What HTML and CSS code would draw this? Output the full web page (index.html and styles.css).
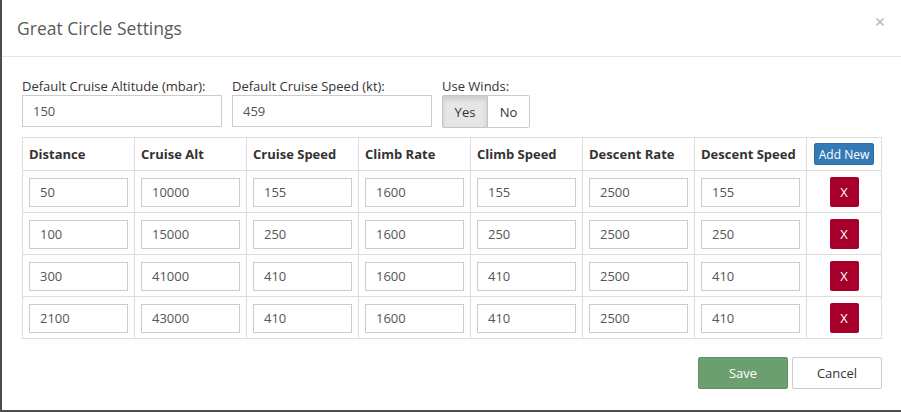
FILE: index.html
```html
<!DOCTYPE html>
<html lang="en">
  <head>
    <meta charset="UTF-8" />
    <meta name="viewport" content="width=device-width, initial-scale=1.0" />
    <title>Great Circle Settings</title>
    <link rel="stylesheet" href="styles.css">
  </head>
  <body>
    <div class="modal">
      <div class="modal-header">
        <h4 class="modal-title">Great Circle Settings</h4>
        <span class="close">
          <svg width="8" height="8" viewBox="0 0 8 8"><path d="M0.5 0.5 L7.5 7.5 M7.5 0.5 L0.5 7.5" stroke="#bdbdbd" stroke-width="1.6" /></svg>
        </span>
      </div>
      <div class="modal-body">
        <div class="defaults">
          <div class="field">
            <label>Default Cruise Altitude (mbar):</label>
            <input class="box wide" type="text" value="150" />
          </div>
          <div class="field">
            <label>Default Cruise Speed (kt):</label>
            <input class="box wide" type="text" value="459" />
          </div>
          <div class="field">
            <label>Use Winds:</label>
            <div class="toggle">
              <span class="yes active">Yes</span><span class="no">No</span>
            </div>
          </div>
        </div>
        <table class="profile">
          <colgroup>
            <col class="c" /><col class="c" /><col class="c" /><col class="c" /><col class="c" /><col class="c" /><col class="c" /><col />
          </colgroup>
          <thead>
            <tr>
              <th>Distance</th><th>Cruise Alt</th><th>Cruise Speed</th><th>Climb Rate</th><th>Climb Speed</th><th>Descent Rate</th><th>Descent Speed</th>
              <th class="act"><button class="add">Add New</button></th>
            </tr>
          </thead>
          <tbody>
            <tr>
              <td><input class="box" value="50" /></td><td><input class="box" value="10000" /></td><td><input class="box" value="155" /></td><td><input class="box" value="1600" /></td><td><input class="box" value="155" /></td><td><input class="box" value="2500" /></td><td><input class="box" value="155" /></td>
              <td class="act"><button class="del">X</button></td>
            </tr>
            <tr>
              <td><input class="box" value="100" /></td><td><input class="box" value="15000" /></td><td><input class="box" value="250" /></td><td><input class="box" value="1600" /></td><td><input class="box" value="250" /></td><td><input class="box" value="2500" /></td><td><input class="box" value="250" /></td>
              <td class="act"><button class="del">X</button></td>
            </tr>
            <tr>
              <td><input class="box" value="300" /></td><td><input class="box" value="41000" /></td><td><input class="box" value="410" /></td><td><input class="box" value="1600" /></td><td><input class="box" value="410" /></td><td><input class="box" value="2500" /></td><td><input class="box" value="410" /></td>
              <td class="act"><button class="del">X</button></td>
            </tr>
            <tr>
              <td><input class="box" value="2100" /></td><td><input class="box" value="43000" /></td><td><input class="box" value="410" /></td><td><input class="box" value="1600" /></td><td><input class="box" value="410" /></td><td><input class="box" value="2500" /></td><td><input class="box" value="410" /></td>
              <td class="act"><button class="del">X</button></td>
            </tr>
          </tbody>
        </table>
      </div>
      <div class="modal-footer">
        <button class="btn save">Save</button>
        <button class="btn cancel">Cancel</button>
      </div>
    </div>
  </body>
</html>
```

FILE: styles.css
```css
* {
  margin: 0;
  padding: 0;
  box-sizing: border-box;
}
body {
  background-color: #4d4d4d;
  font-family: "Open Sans", "Liberation Sans", sans-serif;
  font-size: 13px;
  color: #333;
  overflow: hidden;
}
.modal {
  width: 900px;
  height: 410px;
  margin-left: 2px;
  background-color: #fff;
}

/* header */
.modal-header {
  display: flex;
  justify-content: space-between;
  height: 57px;
  padding: 15px 15px 0 15px;
  border-bottom: 1px solid #e5e5e5;
}
.modal-title {
  font-size: 17.5px;
  font-weight: normal;
  line-height: 26px;
  color: #5a5a5a;
}
.close {
  display: block;
  margin-top: 3px;
  margin-right: 3px;
  line-height: 0;
}

/* defaults */
.modal-body {
  padding: 20px 20px 0 20px;
}
.defaults {
  display: flex;
  column-gap: 10px;
}
.field label {
  display: block;
  line-height: 18px;
}
.box {
  display: block;
  height: 29px;
  padding: 0 10px;
  border: 1px solid #ccc;
  font-family: inherit;
  font-size: 13px;
  color: #555;
  width: 100%;
  outline: none;
}
.box.wide {
  width: 200px;
  height: 32px;
}
.toggle {
  display: flex;
  height: 33px;
}
.toggle span {
  display: flex;
  align-items: center;
  justify-content: center;
  border: 1px solid #ccc;
  background-color: #fff;
}
.toggle .yes {
  width: 46px;
  background-color: #e6e6e6;
  border-color: #c4c4c4;
  box-shadow: inset 0 3px 5px rgba(0, 0, 0, 0.125);
  border-radius: 2px 0 0 2px;
}
.toggle .no {
  width: 42px;
  border-left: 0;
  border-radius: 0 2px 2px 0;
}

/* table */
.profile {
  width: 860px;
  margin-top: 9px;
  table-layout: fixed;
  border-collapse: collapse;
}
.profile col.c {
  width: 112px;
}
.profile th,
.profile td {
  border: 1px solid #ddd;
  padding: 6px;
  text-align: left;
}
.profile td {
  padding: 6px 6px 5px 6px;
}
.profile th {
  height: 33px;
  font-weight: bold;
  line-height: 20px;
}
.profile .act {
  text-align: center;
  padding-left: 0;
  padding-right: 0;
}
.profile th.act {
  padding: 5px 0;
}
.add {
  display: block;
  height: 22px;
  margin: 0 auto;
  padding: 0 4px;
  border: 1px solid #2e6da4;
  border-radius: 2px;
  background-color: #337ab7;
  color: #fff;
  font-family: inherit;
  font-size: 12px;
  white-space: nowrap;
}
.del {
  width: 29px;
  height: 30px;
  border: 0;
  border-radius: 2px;
  background-color: #a6002a;
  color: #fff;
  font-family: inherit;
  font-size: 13px;
  vertical-align: middle;
}

/* footer */
.modal-footer {
  display: flex;
  justify-content: flex-end;
  column-gap: 4px;
  padding: 18px 20px 0 20px;
}
.btn {
  width: 90px;
  height: 32px;
  border-radius: 2px;
  font-family: inherit;
  font-size: 13px;
}
.save {
  background-color: #6c9f70;
  border: 1px solid #5f9463;
  color: #fff;
}
.cancel {
  background-color: #fff;
  border: 1px solid #ccc;
  color: #333;
}
```
